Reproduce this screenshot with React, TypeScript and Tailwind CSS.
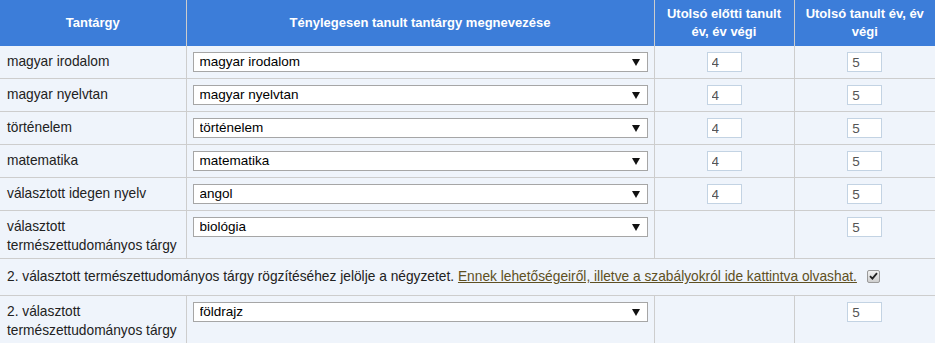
import React from "react";

type Row = {
  label: string[];
  subject: string;
  prev?: string;
  last: string;
};

const rows: Row[] = [
  { label: ["magyar irodalom"], subject: "magyar irodalom", prev: "4", last: "5" },
  { label: ["magyar nyelvtan"], subject: "magyar nyelvtan", prev: "4", last: "5" },
  { label: ["történelem"], subject: "történelem", prev: "4", last: "5" },
  { label: ["matematika"], subject: "matematika", prev: "4", last: "5" },
  { label: ["választott idegen nyelv"], subject: "angol", prev: "4", last: "5" },
  { label: ["választott", "természettudományos tárgy"], subject: "biológia", last: "5" },
];

const extraRow: Row = {
  label: ["2. választott", "természettudományos tárgy"],
  subject: "földrajz",
  last: "5",
};

function FakeSelect({ value }: { value: string }) {
  return (
    <div className="relative">
      <select
        value={value}
        onChange={() => {}}
        className="block h-[20px] w-full appearance-none border border-[#a6a6a6] bg-white pl-[6px] pr-[20px] text-[13.5px] leading-[18px] text-black outline-none"
        style={{ fontFamily: '"Liberation Sans", Arial, sans-serif' }}
      >
        <option>{value}</option>
      </select>
      <svg
        className="pointer-events-none absolute right-[8px] top-[7px]"
        width="8"
        height="7"
        viewBox="0 0 8 7"
      >
        <path d="M0 0 H8 L4 7 Z" fill="#111" />
      </svg>
    </div>
  );
}

function Grade({ value }: { value?: string }) {
  if (!value) return null;
  return (
    <input
      readOnly
      value={value}
      className="mx-auto block h-[20px] w-[35px] border border-[#c3d3e3] bg-white px-[4px] text-[13.5px] leading-[18px] text-[#555] outline-none"
      style={{ fontFamily: '"Liberation Sans", Arial, sans-serif' }}
    />
  );
}

function SubjectRow({ row }: { row: Row }) {
  return (
    <tr className="border-b border-[#cdcdcd] align-top">
      <td className="border-r border-[#cdcdcd] pl-[7px] pr-[6px] pt-[6px] pb-[3px] leading-[19px]">
        {row.label.map((l) => (
          <div key={l}>{l}</div>
        ))}
      </td>
      <td className="border-r border-[#cdcdcd] px-[6px] pt-[6px] pb-[6px]">
        <FakeSelect value={row.subject} />
      </td>
      <td className="border-r border-[#cdcdcd] px-[6px] pt-[6px] pb-[6px]">
        <Grade value={row.prev} />
      </td>
      <td className="px-[6px] pt-[6px] pb-[6px]">
        <Grade value={row.last} />
      </td>
    </tr>
  );
}

export default function App() {
  return (
    <div
      className="w-[935px] bg-[#eff4fb] text-[13.75px] text-[#222]"
      style={{ fontFamily: '"Liberation Sans", Arial, sans-serif' }}
    >
      <table className="w-full table-fixed border-collapse">
        <colgroup>
          <col className="w-[186px]" />
          <col className="w-[468px]" />
          <col className="w-[140px]" />
          <col className="w-[141px]" />
        </colgroup>
        <thead>
          <tr className="h-[46px] bg-[#3c7dd9] text-[13px] font-bold leading-[18px] text-white">
            <th className="border-r border-[#cdcdcd] px-[6px] text-center">Tantárgy</th>
            <th className="border-r border-[#cdcdcd] px-[6px] text-center">
              Ténylegesen tanult tantárgy megnevezése
            </th>
            <th className="border-r border-[#cdcdcd] px-[6px] text-center">
              Utolsó előtti tanult
              <br />
              év, év végi
            </th>
            <th className="px-[6px] text-center">
              Utolsó tanult év, év
              <br />
              végi
            </th>
          </tr>
        </thead>
        <tbody>
          {rows.map((r) => (
            <SubjectRow key={r.subject} row={r} />
          ))}
          <tr className="h-[37px] border-b border-[#cdcdcd]">
            <td colSpan={4} className="pl-[7px] align-middle">
              <div className="flex items-center gap-[10px] pt-[1px]">
                <span>
                  2. választott természettudományos tárgy rögzítéséhez jelölje a négyzetet.{" "}
                  <a href="#" className="text-[#5e5023] underline">
                    Ennek lehetőségeiről, illetve a szabályokról ide kattintva olvashat.
                  </a>
                </span>
                <span className="mb-[3px] flex h-[13px] w-[13px] items-center justify-center rounded-[2px] border border-[#9a9a9a] bg-gradient-to-b from-[#f2f2f2] to-[#cfcfcf]">
                  <svg width="9" height="8" viewBox="0 0 9 8">
                    <path d="M1 4.2 L3.4 6.6 L8 1.2" fill="none" stroke="#222" strokeWidth="1.8" />
                  </svg>
                </span>
              </div>
            </td>
          </tr>
          <SubjectRow row={extraRow} />
        </tbody>
      </table>
    </div>
  );
}
